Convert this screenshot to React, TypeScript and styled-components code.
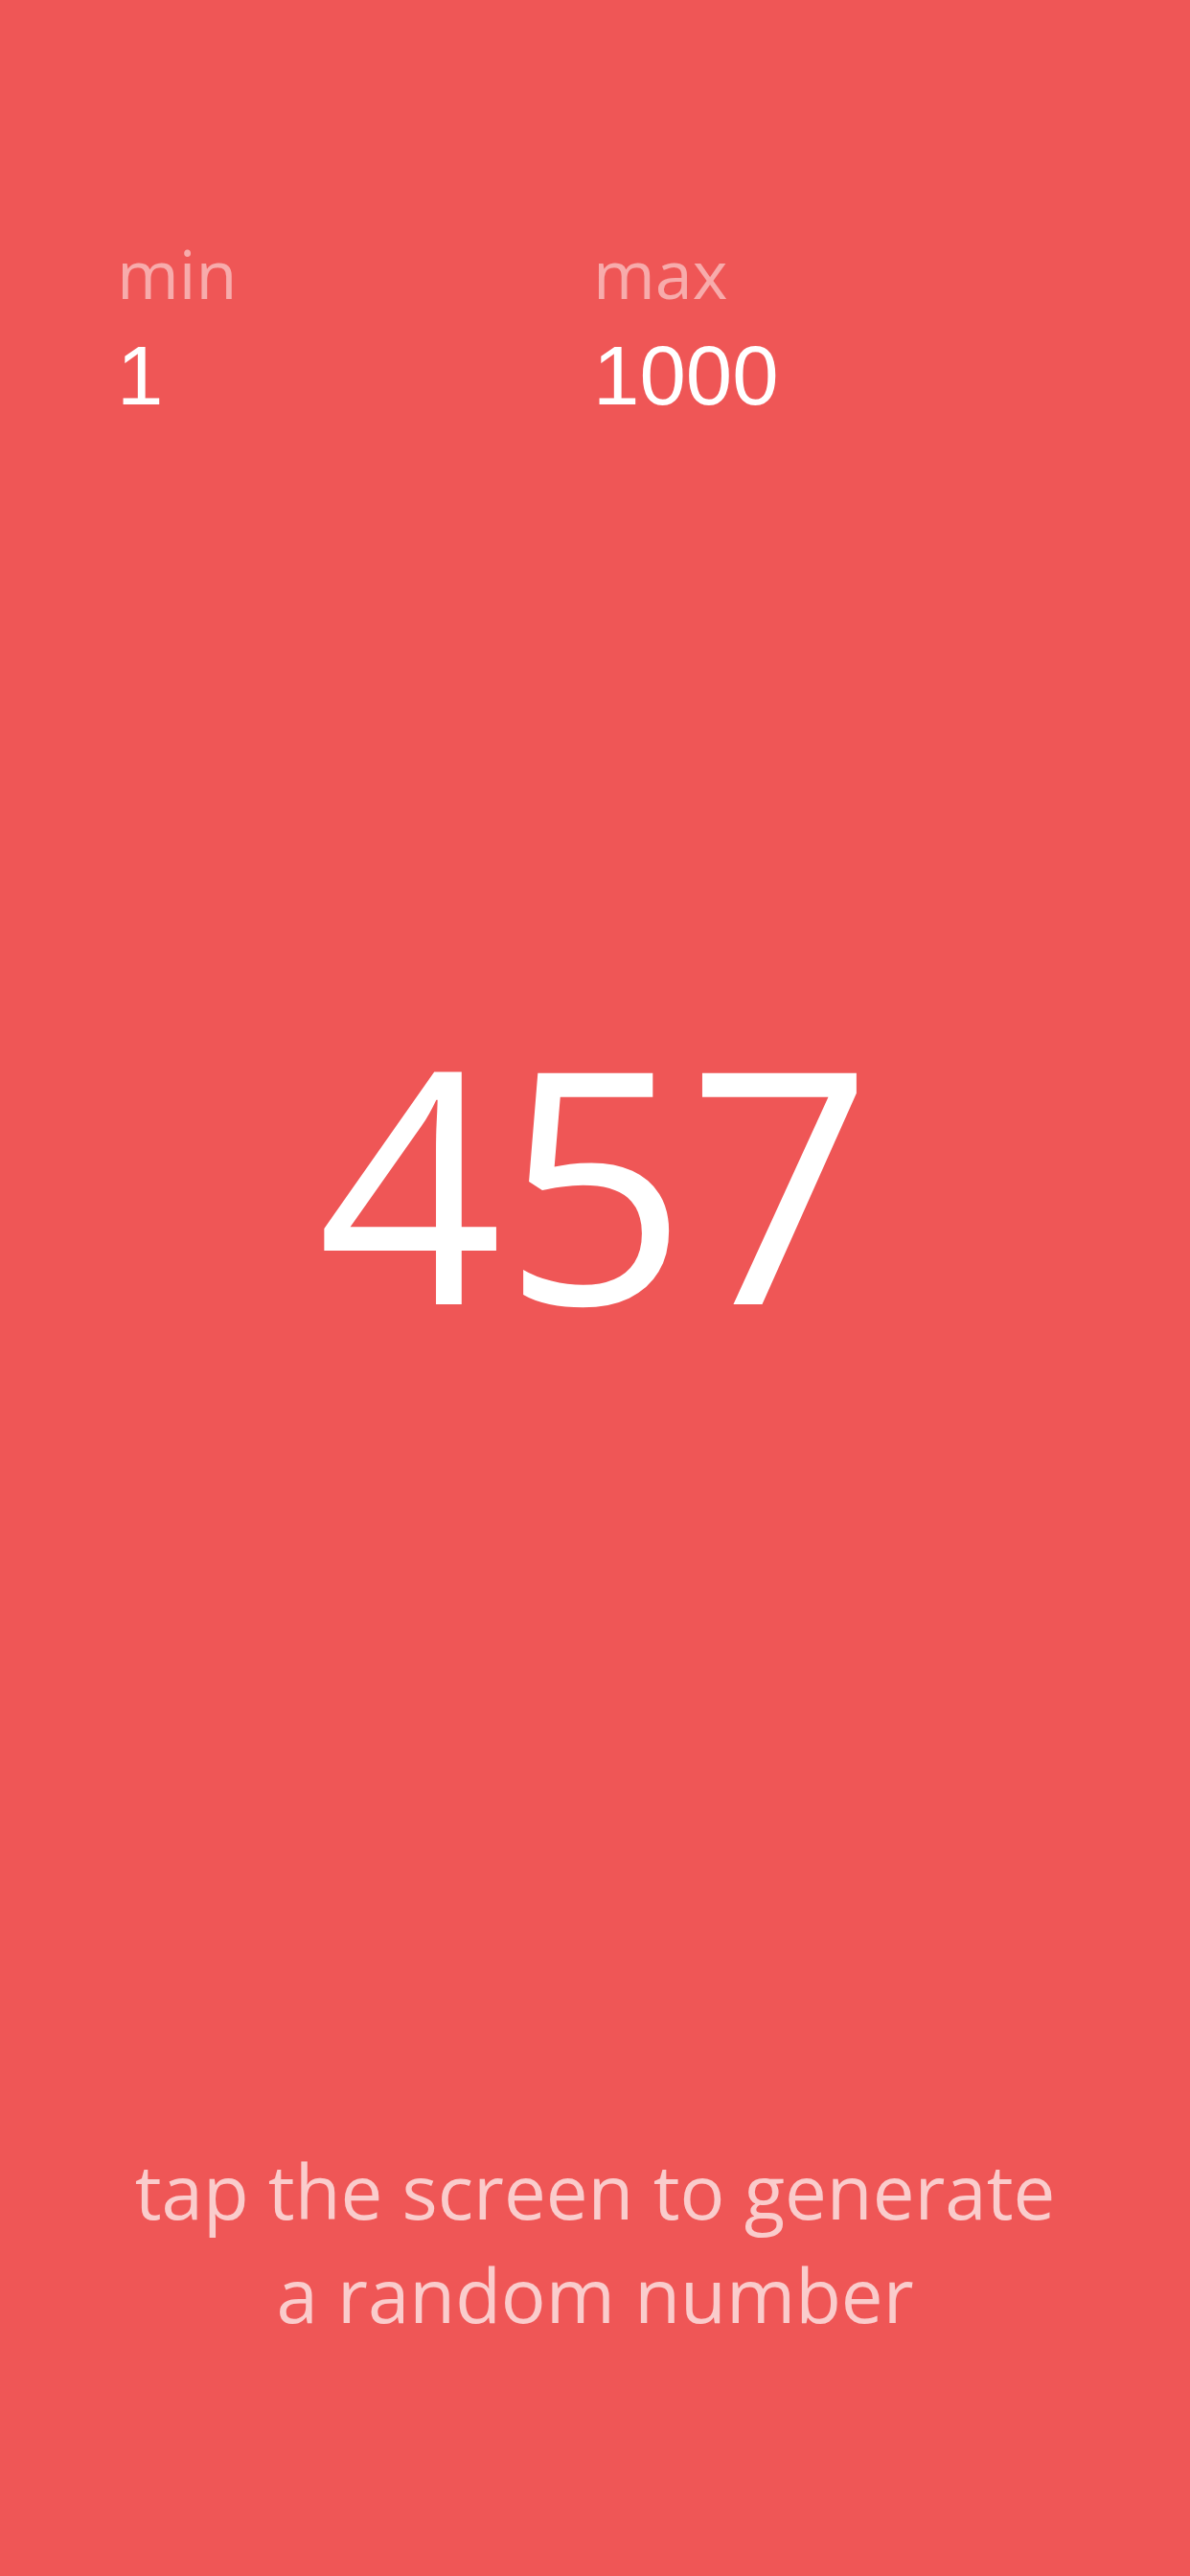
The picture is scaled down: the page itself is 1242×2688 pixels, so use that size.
import React, { useState } from 'react';
import styled, { createGlobalStyle } from 'styled-components';

const GlobalStyle = createGlobalStyle`
  html, body {
    margin: 0;
    padding: 0;
    background: #ef5656;
  }
  * {
    box-sizing: border-box;
  }
`;

const Screen = styled.div`
  display: flex;
  flex-direction: column;
  width: 1242px;
  height: 2688px;
  background: #ef5656;
  overflow: hidden;
  cursor: pointer;
  user-select: none;
`;

const RangeHeader = styled.div`
  display: grid;
  grid-template-columns: 1fr 1fr;
  padding: 245px 126px 0 122px;
`;

const RangeColumn = styled.div`
  display: flex;
  flex-direction: column;
  gap: 19px;
`;

const RangeLabel = styled.span`
  font-family: 'Open Sans', 'Noto Sans', sans-serif;
  font-size: 70px;
  line-height: 80px;
  color: rgba(255, 255, 255, 0.5);
`;

const RangeValue = styled.span`
  font-family: 'Liberation Sans', Arial, sans-serif;
  font-size: 87px;
  line-height: 96px;
  color: #fff;
`;

const NumberArea = styled.div`
  flex: 1;
  display: flex;
  align-items: center;
  justify-content: center;
  padding-bottom: 212px;
`;

const BigNumber = styled.span`
  font-family: 'Open Sans', 'Noto Sans', sans-serif;
  font-size: 338px;
  line-height: 338px;
  color: #fff;
`;

const Hint = styled.p`
  margin: 0 auto;
  padding-bottom: 240px;
  max-width: 990px;
  text-align: center;
  font-family: 'Open Sans', 'Noto Sans', sans-serif;
  font-size: 78px;
  line-height: 108px;
  color: rgba(255, 255, 255, 0.7);
`;

const App: React.FC = () => {
  const min = 1;
  const max = 1000;
  const [value, setValue] = useState(457);

  const generate = () => {
    setValue(Math.floor(Math.random() * (max - min + 1)) + min);
  };

  return (
    <>
      <GlobalStyle />
      <Screen onClick={generate}>
        <RangeHeader>
          <RangeColumn>
            <RangeLabel>min</RangeLabel>
            <RangeValue>{min}</RangeValue>
          </RangeColumn>
          <RangeColumn>
            <RangeLabel>max</RangeLabel>
            <RangeValue>{max}</RangeValue>
          </RangeColumn>
        </RangeHeader>
        <NumberArea>
          <BigNumber>{value}</BigNumber>
        </NumberArea>
        <Hint>tap the screen to generate a random number</Hint>
      </Screen>
    </>
  );
};

export default App;
